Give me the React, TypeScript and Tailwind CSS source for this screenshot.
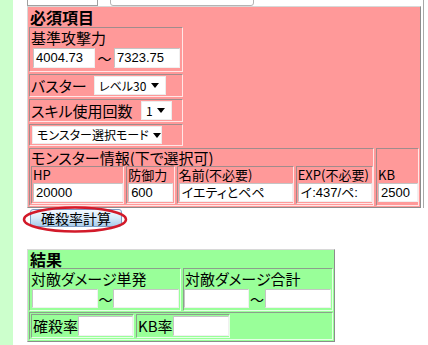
import React from 'react';

const jp = "font-['Noto_Sans_CJK_JP',sans-serif] [font-feature-settings:'palt']";
const num = "font-['Liberation_Sans','Noto_Sans_CJK_JP',sans-serif]";

const outerBorder = 'border border-t-[#d8d8d8] border-l-[#d8d8d8] border-b-[#8c8c8c] border-r-[#8c8c8c]';
const cellBorder = 'border border-t-[#a08c8c] border-l-[#a08c8c] border-b-[#ffe6e6] border-r-[#ffe6e6]';
const greenCell = 'border border-t-[#8ca08c] border-l-[#8ca08c] border-b-[#e6ffe6] border-r-[#e6ffe6]';

const Field: React.FC<{ className: string; value?: string }> = ({ className, value }) => (
  <div
    className={`shrink-0 bg-white border border-t-[#c4c4c4] border-l-[#c4c4c4] border-b-[#f0f0f0] border-r-[#f0f0f0] pl-[2px] text-[13px] leading-[17px] whitespace-nowrap overflow-hidden ${num} ${className}`}
  >
    {value}
  </div>
);

const Arrow = () => (
  <svg width="8" height="5" viewBox="0 0 8 5" className="shrink-0">
    <path d="M0 0h8L4 5z" fill="#000" />
  </svg>
);

const Select: React.FC<{ className: string; label: string; text: string }> = ({ className, label, text }) => (
  <div
    className={`shrink-0 flex items-center gap-[4px] overflow-hidden bg-white border border-[#ececec] pl-[4px] pr-[6px] whitespace-nowrap ${className}`}
  >
    <span className={`flex-1 ${text}`}>{label}</span>
    <Arrow />
  </div>
);

const Tilde: React.FC<{ className: string }> = ({ className }) => (
  <div className={`shrink-0 text-center text-[14px] leading-[20px] ${className}`}>〜</div>
);

export default function App() {
  return (
    <div className={`flex min-h-[345px] bg-white text-black ${jp}`}>
      <div className="w-[13px] shrink-0 bg-[#ccffcc]" />
      <div className="ml-[14px] w-[397px] shrink-0">
        <div className="border-r border-[#a8a8a8]">
          {/* bits of the form above, scrolled off */}
          <div className="flex h-[6px] items-end overflow-hidden">
            <div className="h-[20px] w-[71px] shrink-0 border border-[#a0a0a0] bg-white" />
            <div className="ml-[12px] h-[20px] w-[144px] shrink-0 rounded-b-[3px] border border-[#b4b4b4] bg-white" />
          </div>

          {/* 必須項目 */}
          <div className={`w-[394px] bg-[#ff9999] px-[1px] pb-[1px] ${outerBorder}`}>
            <div className="h-[20px] pl-[1px] text-[16px] font-bold leading-[20px]">必須項目</div>
            <div className="flex flex-col gap-[2px]">
              <div className={`h-[45px] w-[154px] ${cellBorder}`}>
                <div className="h-[20px] whitespace-nowrap pl-[1px] text-[15px] leading-[20px]">基準攻撃力</div>
                <div className="flex pl-[3px]">
                  <Field className="h-[20px] w-[62px]" value="4004.73" />
                  <Tilde className="w-[19px]" />
                  <Field className="h-[20px] w-[66px]" value="7323.75" />
                </div>
              </div>
              <div className={`flex h-[23px] w-[154px] items-center pl-[1px] ${cellBorder}`}>
                <span className="w-[63px] shrink-0 whitespace-nowrap text-[15px] leading-[20px]">バスター</span>
                <Select className="h-[19px] w-[72px]" label="レベル30" text="text-[12px] leading-[17px]" />
              </div>
              <div className={`flex h-[23px] w-[154px] items-center pl-[1px] ${cellBorder}`}>
                <span className="w-[110px] shrink-0 whitespace-nowrap text-[15px] leading-[20px]">スキル使用回数</span>
                <Select className="h-[19px] w-[31px]" label="1" text="text-[12px] leading-[17px]" />
              </div>
              <div className={`flex h-[22px] w-[154px] items-center pl-[2px] ${cellBorder}`}>
                <Select className="h-[18px] w-[130px]" label="モンスター選択モード" text="text-[12px] leading-[16px]" />
              </div>
              <div className="flex gap-[2px]">
                <div className={`h-[58px] w-[345px] ${cellBorder}`}>
                  <div className="h-[17px] whitespace-nowrap pl-[1px] text-[15px] leading-[17px]">モンスター情報(下で選択可)</div>
                  <div className="flex gap-[2px] pl-[1px]">
                    {[
                      { label: 'HP', w: 'w-[94px]', f: 'w-[90px]', v: '20000' },
                      { label: '防御力', w: 'w-[49px]', f: 'w-[45px]', v: '600' },
                      { label: '名前(不必要)', w: 'w-[118px]', f: 'w-[114px]', v: 'イエティとペペ' },
                      { label: 'EXP(不必要)', w: 'w-[78px]', f: 'w-[74px]', v: 'イ:437/ペ:' },
                    ].map((c) => (
                      <div key={c.label} className={`h-[38px] pl-[1px] ${c.w} ${cellBorder}`}>
                        <div className="h-[16px] whitespace-nowrap text-[13px] leading-[16px]">{c.label}</div>
                        <Field className={`h-[19px] ${c.f}`} value={c.v} />
                      </div>
                    ))}
                  </div>
                </div>
                <div className={`flex h-[58px] w-[43px] flex-col justify-end pb-[3px] pl-[1px] ${cellBorder}`}>
                  <div className="h-[16px] text-[13px] leading-[16px]">KB</div>
                  <Field className="h-[19px] w-[40px]" value="2500" />
                </div>
              </div>
            </div>
          </div>
        </div>

        {/* 計算ボタン */}
        <div className="relative mt-[1px] h-[18px]">
          <button className="ml-[3px] flex h-[18px] w-[92px] items-center justify-center rounded-[3px] border border-[#7a9cc4] bg-gradient-to-b from-[#f4faff] via-[#d6eaf8] to-[#aacdeb] text-[14px] leading-[16px]">
            確殺率計算
          </button>
          <svg className="pointer-events-none absolute left-[-6px] top-[-4px]" width="108" height="30" viewBox="0 0 108 30">
            <ellipse cx="54" cy="14.5" rx="51" ry="12" fill="none" stroke="#d21a2a" strokeWidth="2.5" />
          </svg>
        </div>

        {/* 結果 */}
        <div className={`mt-[22px] w-[308px] bg-[#99ff99] px-[1px] pb-[1px] ${outerBorder}`}>
          <div className="h-[18px] pl-[1px] text-[16px] font-bold leading-[18px]">結果</div>
          <div className="flex gap-[2px]">
            <div className={`h-[43px] w-[152px] ${greenCell}`}>
              <div className="h-[20px] whitespace-nowrap pl-[1px] text-[15px] leading-[20px]">対敵ダメージ単発</div>
              <div className="flex pl-[2px]">
                <Field className="h-[19px] w-[66px]" />
                <Tilde className="w-[15px]" />
                <Field className="h-[19px] w-[66px]" />
              </div>
            </div>
            <div className={`h-[43px] w-[150px] ${greenCell}`}>
              <div className="h-[20px] whitespace-nowrap pl-[1px] text-[15px] leading-[20px]">対敵ダメージ合計</div>
              <div className="flex">
                <Field className="h-[19px] w-[65px]" />
                <Tilde className="w-[16px]" />
                <Field className="h-[19px] w-[66px]" />
              </div>
            </div>
          </div>
          <div className={`mt-[1px] h-[28px] w-[304px] p-[1px] ${greenCell}`}>
            <div className="flex gap-[2px]">
              <div className={`flex h-[24px] w-[103px] items-center pl-[1px] ${greenCell}`}>
                <span className="shrink-0 whitespace-nowrap text-[15px] leading-[20px]">確殺率</span>
                <Field className="ml-auto mr-[1px] h-[20px] w-[55px]" />
              </div>
              <div className={`flex h-[24px] w-[94px] items-center pl-[1px] ${greenCell}`}>
                <span className="shrink-0 whitespace-nowrap text-[15px] leading-[20px]">KB率</span>
                <Field className="ml-auto mr-[1px] h-[20px] w-[56px]" />
              </div>
            </div>
          </div>
        </div>
      </div>
    </div>
  );
}
